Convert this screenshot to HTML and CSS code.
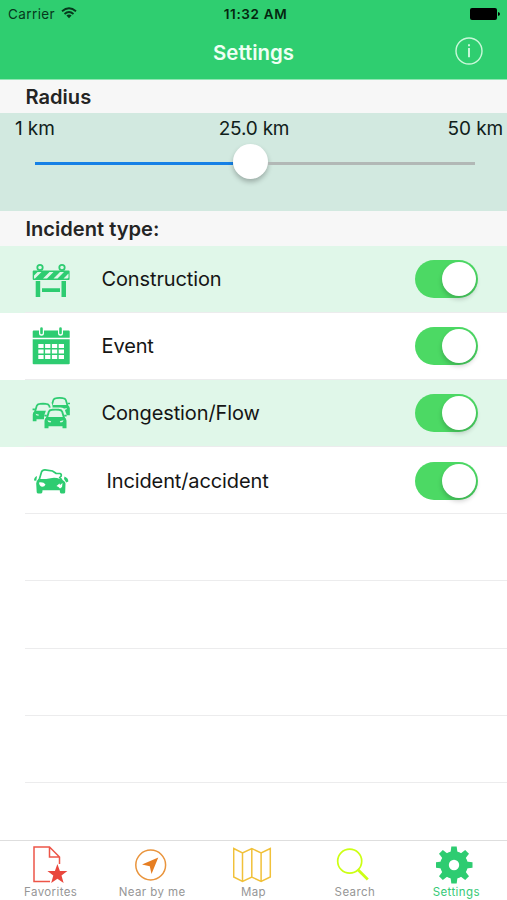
FILE: index.html
```html
<!DOCTYPE html>
<html lang="en">
<head>
<meta charset="utf-8">
<title>Settings</title>
<link rel="stylesheet" href="styles.css">
</head>
<body>
<div class="app">
  <header class="top">
    <div class="status">
      <div class="carrier"><span>Carrier</span>
        <svg width="16" height="12" viewBox="0 0 16 12"><g fill="none" stroke="#06391c" stroke-width="1.8"><path d="M1 4.2Q8-1.8 15 4.2"/><path d="M3.5 7Q8 3 12.500 7"/></g><path d="M5.400 8.600Q8 6.400 10.600 8.600L8 11.300Z" fill="#06391c"/></svg>
      </div>
      <span class="time">11:32 AM</span>
      <svg class="battery" width="30" height="12" viewBox="0 0 30 12"><rect width="27" height="12" rx="2"/><path d="M28 4q2 .5 2 2t-2 2Z"/></svg>
    </div>
    <div class="nav">
      <h1>Settings</h1>
      <svg class="info" width="28" height="28" viewBox="0 0 28 28"><circle cx="14" cy="14" r="13" fill="none" stroke="#c9f8d9" stroke-width="1.4"/><path d="M14 11v9.300M14 7.300v2" stroke="#d8fbe4" stroke-width="1.800"/></svg>
    </div>
  </header>

  <h2 class="section radius">Radius</h2>
  <section class="range">
    <div class="labels"><span>1 km</span><span class="current">25.0 km</span><span>50 km</span></div>
    <div class="slider"><div class="filled"></div><div class="knob"></div><div class="rest"></div></div>
  </section>

  <h2 class="section">Incident type:</h2>
  <ul class="list">
    <li class="row tinted">
      <svg class="icon" width="40" height="44" viewBox="31 257 40 44" fill="#2ecc71"><circle cx="40" cy="267.500" r="2.700" fill="none" stroke="#2ecc71" stroke-width="1.800"/><circle cx="62" cy="267.500" r="2.700" fill="none" stroke="#2ecc71" stroke-width="1.800"/><rect x="32.700" y="270.500" width="36.900" height="9.500" rx="1"/><path d="M34 278.500v-3l3.500-3.500h4l-6.500 6.500ZM43 278.500l6.500-6.500h4l-6.500 6.500ZM53.500 278.500l6.500-6.500h4l-6.500 6.500ZM63.500 278.500l5-5v4l-1 1Z" fill="#e0f7e9"/><path d="M35.700 281h4.500v16h-4.500ZM61.500 281h4.500v16h-4.500ZM42 288.300h18v3.700h-18Z"/></svg>
      <span class="name">Construction</span><span class="switch"><i></i></span>
    </li>
    <li class="row">
      <svg class="icon" width="40" height="44" viewBox="31 324 40 44" fill="#2ecc71"><path d="M32.700 331.500q0-1 1-1h35q1 0 1 1v6.300h-37ZM32.700 339.300h37v24.200q0 .8-1 .8h-35q-1 0-1-.8Z"/><path d="M41.500 328.800v4.500M60.500 328.800v4.500" stroke="#fff" stroke-width="5" stroke-linecap="round"/><path d="M41.500 328.500v4.500M60.500 328.500v4.500" stroke="#2ecc71" stroke-width="2.600" stroke-linecap="round"/><path d="M38.300 344h5.300v4h-5.300ZM45.100 344h5.300v4h-5.300ZM51.900 344h5.300v4h-5.300ZM58.700 344h5.300v4h-5.300ZM38.300 349.500h5.300v4h-5.300ZM45.100 349.500h5.300v4h-5.300ZM51.900 349.500h5.300v4h-5.300ZM58.700 349.500h5.300v4h-5.300ZM38.300 355h5.300v4h-5.300ZM45.100 355h5.300v4h-5.300ZM51.900 355h5.300v4h-5.300ZM58.700 355h5.300v4h-5.300Z" fill="#fff"/></svg>
      <span class="name">Event</span><span class="switch"><i></i></span>
    </li>
    <li class="row tinted">
      <svg class="icon" width="40" height="44" viewBox="31 391 40 44">
        <defs><g id="car"><path d="M2.900 9.500L4.800 3Q5.400 1.200 8 1Q11.500.6 15 1Q17.600 1.200 18.200 3L20.100 9.500" fill="none" stroke="#2ecc71" stroke-width="1.900"/><path d="M3 8.300H20Q22.500 9.500 22.500 12V19.500H18.500V17.500H4.500V19.500H.5V12Q.5 9.500 3 8.300Z" fill="#2ecc71"/><path d="M.3 6.800h2.500M20.200 6.800h2.500" stroke="#2ecc71" stroke-width="1.800"/><path d="M3.500 11.500l3.700 1-.7 1.300q-2.700 0-3-2.300ZM19.500 11.500l-3.700 1 .7 1.300q2.700 0 3-2.300Z" fill="#e0f7e9"/></g></defs>
        <use href="#car" transform="translate(48.900 397.200) scale(.93)"/>
        <path d="M36 424V406q1-4 5-4.300h8q3 0 3.500 4.300v12H43v6Z" fill="#e0f7e9"/>
        <use href="#car" transform="translate(32.300 403) scale(.93)"/>
        <path d="M44 430V416l2.300-6.500q1-2 4-2h10.400q3 0 4 2l2.300 6.500v14Z" fill="#e0f7e9"/>
        <use href="#car" transform="translate(44 408.800)"/>
      </svg>
      <span class="name">Congestion/Flow</span><span class="switch"><i></i></span>
    </li>
    <li class="row">
      <svg class="icon" width="40" height="44" viewBox="31 459 40 44" fill="#2ecc71"><path d="M39 480.500l2.500-8.500q.8-2.300 3.500-2.200l7.500 1.200 3.500 2.300 4 .2q1.700.7 1.200 2.500l-1.400 1.500 2 2.500" fill="none" stroke="#2ecc71" stroke-width="1.700"/><path d="M38.500 479q7 .3 12-.8 5-1 9.500.8 5 1.500 5.500 4.500l-.3 8.800q-.2 1.300-1.500 1.300h-2.400q-1.500 0-1.500-3.300H42.500q0 3.300-1.500 3.300h-2.600q-1.500 0-1.700-1.300l-.5-8.800q0-3 2.300-4.500Z"/><path d="M37 476q-3 1-3 4.500l2.300.3ZM64.500 476.500q4 1.500 3.800 5l-2 1-2.300-3.500Z"/><path d="M39 482.500q4.500-.7 6.500 2-.8 2.300-3.500 2.200-2.800-.7-3-4.200ZM56.500 486l3-2.500.5 1.500 2.500-2-.5 4-2 1.500-1.500-1.500Z" fill="#fff"/></svg>
      <span class="name shifted">Incident/accident</span><span class="switch"><i></i></span>
    </li>
    <li class="row"></li><li class="row"></li><li class="row"></li><li class="row"></li>
  </ul>

  <nav class="tabs">
    <div class="tab"><svg width="40" height="42" viewBox="31 843 40 42"><path d="M50 881.500H34V847h15.500l10 10V864M49.500 847v10h10" fill="none" stroke="#ed5548" stroke-width="1.500"/><path d="M57.400 864l2.500 6.900 7.500.2-5.900 4.500 2.100 7.400-6.200-4.300-6.200 4.300 2.100-7.400-5.900-4.500 7.500-.2Z" fill="#e9473d"/></svg><span>Favorites</span></div>
    <div class="tab"><svg width="40" height="42" viewBox="132 843 40 42"><circle cx="150.700" cy="865" r="14.900" fill="none" stroke="#e9943c" stroke-width="1.500"/><path d="M158.300 857.500l-6.800 16.400-1.700-7.700-7.800-1.700Z" fill="#e67e22"/></svg><span>Near by me</span></div>
    <div class="tab"><svg width="40" height="42" viewBox="233 843 40 42"><path d="M233.700 848.500l8.800 4.500 9.300-4.500 9.300 4.500 9.200-4.500v28.500l-9.200 4.500-9.300-4.500-9.300 4.500-8.800-4.500ZM242.500 853v28.500M251.800 848.500V877M261.100 853v28.500" fill="none" stroke="#f1c13a" stroke-width="1.500"/></svg><span>Map</span></div>
    <div class="tab"><svg width="40" height="42" viewBox="335 843 40 42"><circle cx="349.700" cy="861.200" r="12" fill="none" stroke="#ccff14" stroke-width="1.700"/><path d="M358 869.800l9.800 9.700" stroke="#ccff14" stroke-width="2.800"/></svg><span>Search</span></div>
    <div class="tab active"><svg width="40" height="42" viewBox="435.500 843 40 42"><g fill="#2ecc71"><g id="teeth"><path id="tooth" d="M450 853l.8-6.500h5.400l.8 6.500v24l-.8 6.500h-5.400l-.8-6.500Z"/><use href="#tooth" transform="rotate(90 453.500 865)"/></g><use href="#teeth" transform="rotate(45 453.500 865)"/><circle cx="453.500" cy="865" r="13.800"/></g><circle cx="453.500" cy="865" r="5.200" fill="#fff"/></svg><span>Settings</span></div>
  </nav>
</div>
</body>
</html>
```
FILE: styles.css
```css
* { box-sizing: border-box; }
body { margin: 0; background: #fff; font-family: Inter, "Liberation Sans", sans-serif; color: #151515; }
svg { display: block; flex: none; }
h1, h2, ul { margin: 0; padding: 0; }
.app { width: 507px; height: 900px; display: flex; flex-direction: column; overflow: hidden; }
.top { height: 80px; flex: none; background: #2fce70; border-bottom: 1px solid #91e6b3; }
.status { height: 28px; display: grid; grid-template-columns: 1fr auto 1fr; align-items: center; padding: 0 7px 0 8px; font-size: 13.5px; }
.carrier { display: flex; align-items: center; gap: 6px; color: #06391c; letter-spacing: .4px; }
.carrier svg { margin-top: -2px; }
.time { font-weight: 600; color: #04260f; margin-left: 3px; letter-spacing: .65px; }
.battery { justify-self: end; }
.nav { height: 50px; display: grid; grid-template-columns: 1fr auto 1fr; align-items: center; }
.nav h1 { grid-column: 2; font-size: 20.4px; line-height: 24px; font-weight: 600; color: #effff4; margin-top: -1px; }
.info { justify-self: end; margin-right: 24px; margin-top: -4px; }
.section { height: 34.5px; flex: none; background: #f7f7f7; padding-left: 25.5px; font-size: 20.1px; line-height: 36px; font-weight: 600; color: #242424; }
.section.radius { height: 33px; line-height: 35px; }
.range { height: 98px; flex: none; background: #d2e9e0; }
.labels { height: 30px; display: grid; grid-template-columns: 1fr auto 1fr; padding: 0 4px 0 15px; font-size: 19px; line-height: 31px; color: #10201a; letter-spacing: -.1px; }
.labels span:last-child { text-align: right; }
.labels .current { margin: 0 5px 0 -5px; letter-spacing: -.2px; }
.slider { display: flex; align-items: center; height: 40px; padding: 0 32px 0 35px; }
.filled { width: 198px; height: 3px; background: #1681e6; }
.rest { flex: 1; height: 3px; background: #b2b8b6; }
.knob { width: 35px; height: 35px; border-radius: 50%; background: #fff; box-shadow: 0 3px 5px rgba(0,0,0,.25); margin-top: -3px; }
.list { list-style: none; flex: none; }
.row { height: 67.2px; display: flex; align-items: center; padding: 0 29px 0 31px; background: linear-gradient(#ececed, #ececed) 25px 100% / 100% 1px no-repeat; }
.row.tinted { background-color: #e0f7e9; }
.name { margin-left: 30.5px; font-size: 20px; line-height: 26px; flex: 1; letter-spacing: -.12px; }
.name.shifted { margin-left: 35.5px; }
.switch { width: 63px; height: 38px; border-radius: 19px; background: #4cd964; display: flex; justify-content: flex-end; padding: 2px; }
.switch i { width: 34px; height: 34px; border-radius: 50%; background: #fff; box-shadow: 0 3px 5px rgba(0,0,0,.2); }
.tabs { height: 60px; margin-top: auto; flex: none; background: #fff; border-top: 1px solid #dedede; display: grid; grid-template-columns: repeat(5, 1fr); }
.tab { display: flex; flex-direction: column; align-items: center; padding-top: 2px; font-size: 11.5px; line-height: 14px; letter-spacing: .4px; color: #969696; }
.tab span { white-space: nowrap; }
.tab.active { color: #36c976; }
```
